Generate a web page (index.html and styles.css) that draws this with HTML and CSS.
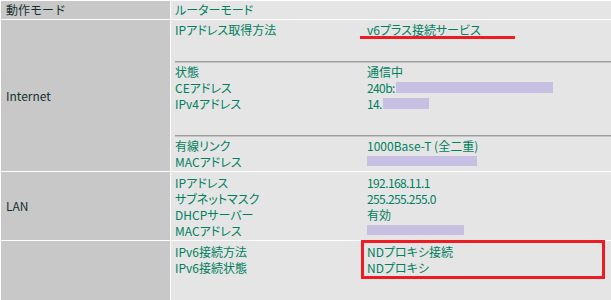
FILE: index.html
```html
<!DOCTYPE html>
<html lang="ja">
<head>
  <meta charset="UTF-8">
  <title>ステータス</title>
  <link rel="stylesheet" href="styles.css">
</head>
<body>
  <div class="status">
    <!-- 動作モード -->
    <div class="head">動作モード</div>
    <div class="body mode">ルーターモード</div>

    <!-- Internet -->
    <div class="head">Internet</div>
    <div class="body">
      <div class="group g-method">
        <div class="item"><span class="label">IPアドレス取得方法</span><span class="value marked">v6プラス接続サービス</span></div>
      </div>
      <div class="group g-state">
        <div class="item"><span class="label">状態</span><span class="value">通信中</span></div>
        <div class="item"><span class="label">CEアドレス</span><span class="value num">240b:<span class="hidden ce"></span></span></div>
        <div class="item"><span class="label">IPv4アドレス</span><span class="value num">14.<span class="hidden v4"></span></span></div>
      </div>
      <div class="group g-link">
        <div class="item"><span class="label">有線リンク</span><span class="value">1000Base-T (全二重)</span></div>
        <div class="item"><span class="label">MACアドレス</span><span class="value"><span class="hidden wan-mac"></span></span></div>
      </div>
    </div>

    <!-- LAN -->
    <div class="head">LAN</div>
    <div class="body">
      <div class="group g-lan">
        <div class="item"><span class="label">IPアドレス</span><span class="value num">192.168.11.1</span></div>
        <div class="item"><span class="label">サブネットマスク</span><span class="value num">255.255.255.0</span></div>
        <div class="item"><span class="label">DHCPサーバー</span><span class="value">有効</span></div>
        <div class="item"><span class="label">MACアドレス</span><span class="value"><span class="hidden lan-mac"></span></span></div>
      </div>
    </div>

    <!-- IPv6 -->
    <div class="head"></div>
    <div class="body">
      <div class="group g-v6">
        <div class="item"><span class="label">IPv6接続方法</span><span class="value">NDプロキシ接続</span></div>
        <div class="item"><span class="label">IPv6接続状態</span><span class="value">NDプロキシ</span></div>
        <div class="callout"></div>
      </div>
    </div>
  </div>
</body>
</html>
```

FILE: styles.css
```css
* {
  margin: 0;
  padding: 0;
  box-sizing: border-box;
}

html, body {
  height: 100%;
  overflow: hidden;
}

body {
  background: #fff;
  font-family: "Noto Sans CJK JP", "Liberation Sans", sans-serif;
  font-size: 12px;
}

/* status table: white gaps act as the cell borders */
.status {
  display: grid;
  grid-template-columns: 169px 1fr;
  grid-template-rows: 18px 151px 68px 1fr;
  gap: 1px;
  padding: 1px 0 0 1px;
  height: 100%;
  background: #fff;
}

.head {
  display: flex;
  align-items: center;
  padding-left: 5px;
  background: #c8c8c8;
  color: #17302f;
  line-height: 16px;
}

.body {
  padding-left: 4px;
  background: #e5e5e5;
  color: #00805f;
  font-feature-settings: "palt";
  line-height: 16px;
}

.mode {
  display: flex;
  align-items: center;
}

.group + .group {
  border-top: 1px solid #9c9c9c;
  box-shadow: inset 0 1px 0 #c4c4c4;
}

.g-method { height: 41px; padding-top: 2px; }
.g-state  { height: 74px; padding-top: 2px; }
.g-link   { height: 36px; padding-top: 2px; }
.g-lan    { padding-top: 3px; }
.g-v6     { padding-top: 3px; position: relative; height: 100%; }

.item {
  display: grid;
  grid-template-columns: 192px 1fr;
  height: 16px;
}

.value {
  white-space: nowrap;
}

/* digits sit a little tighter */
.value.num {
  letter-spacing: -0.6px;
}

/* masked address values */
.hidden {
  display: inline-block;
  vertical-align: top;
  margin-top: 2px;
  height: 11px;
  background: #c8c0e3;
}

.hidden.ce { width: 157px; margin-left: 1px; }
.hidden.v4 { width: 46px; margin-left: 1px; }
.hidden.wan-mac { width: 110px; height: 10px; }
.hidden.lan-mac { width: 97px; height: 10px; }

/* red annotations */
.marked {
  position: relative;
}

.marked::after {
  content: "";
  position: absolute;
  left: -7px;
  top: 14px;
  width: 155px;
  height: 3px;
  background: #ed1c24;
}

.callout {
  position: absolute;
  left: 186px;
  top: -1px;
  width: 244px;
  height: 39px;
  border: 3px solid #ed1c24;
}
```
